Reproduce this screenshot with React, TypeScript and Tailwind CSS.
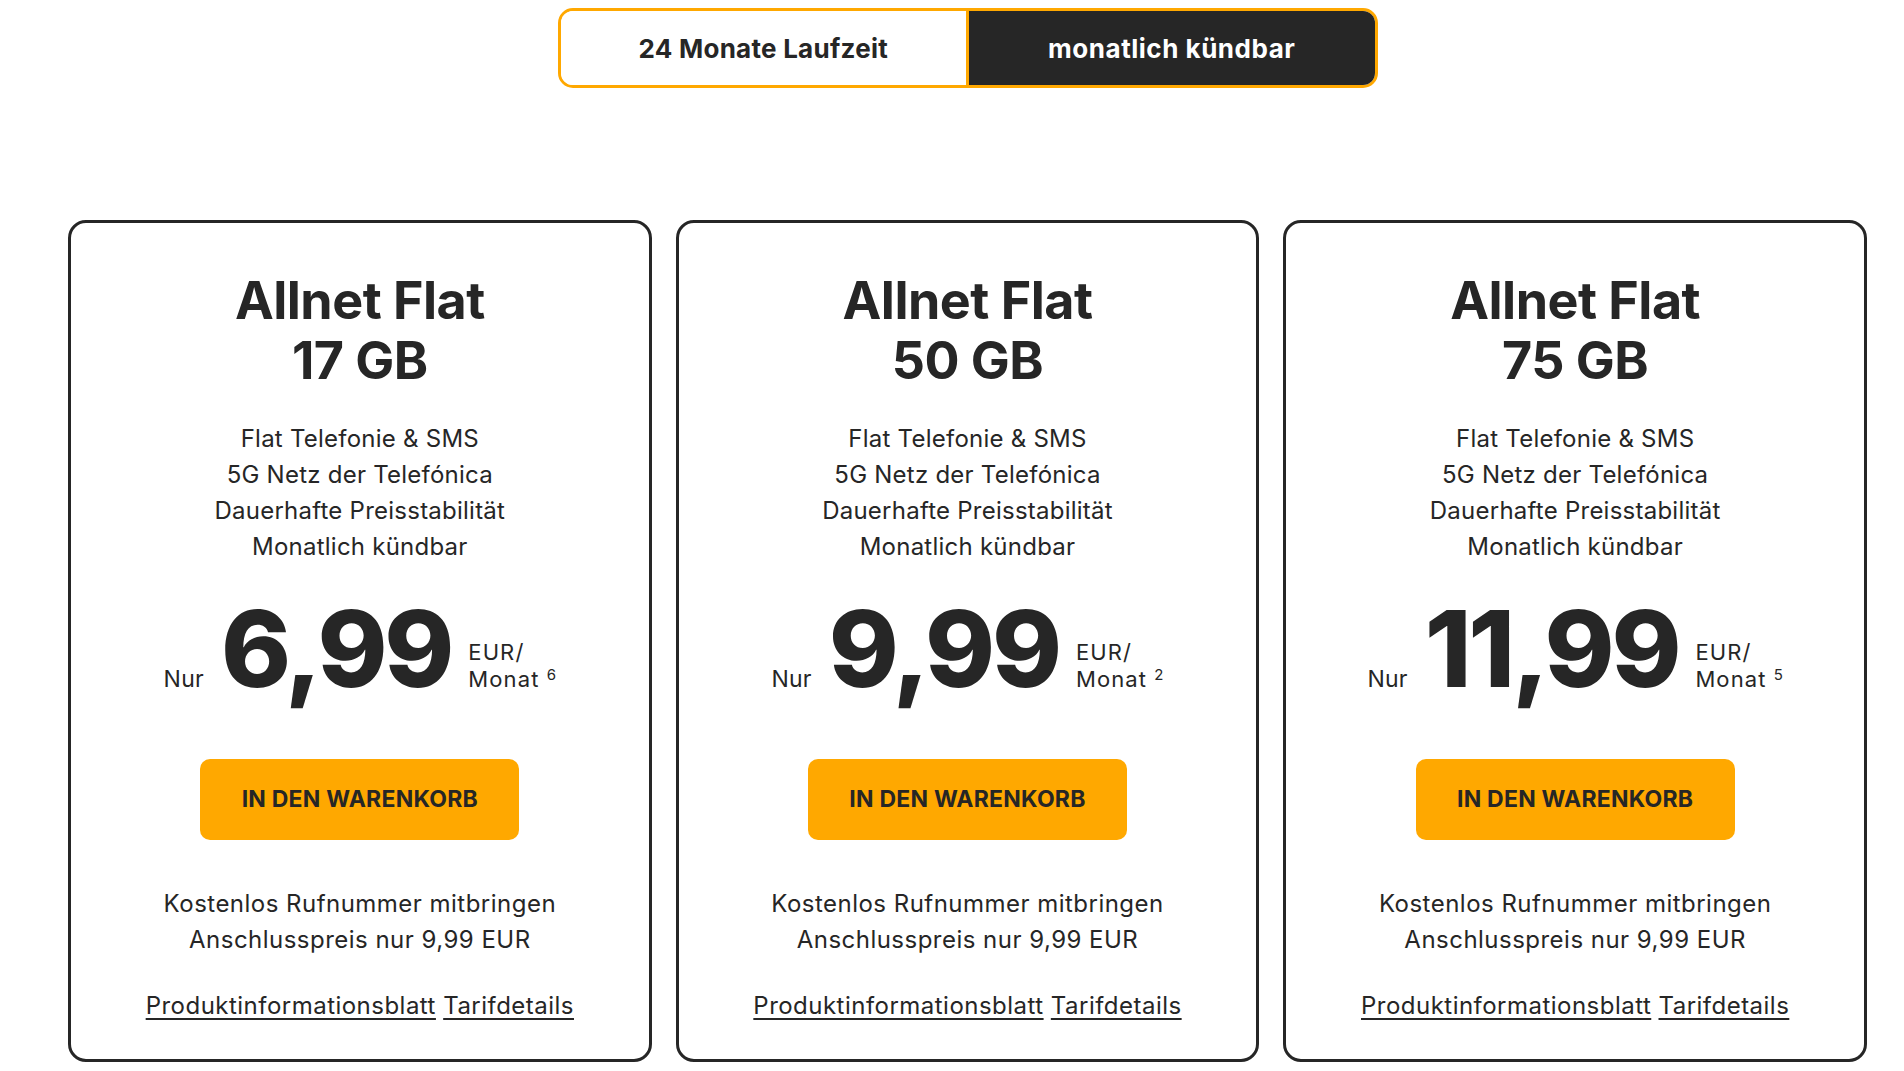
import React, { useState } from 'react';

type Plan = {
  gb: string;
  price: string;
  note: string;
};

const plans: Plan[] = [
  { gb: '17 GB', price: '6,99', note: '6' },
  { gb: '50 GB', price: '9,99', note: '2' },
  { gb: '75 GB', price: '11,99', note: '5' },
];

const features = [
  'Flat Telefonie & SMS',
  '5G Netz der Telefónica',
  'Dauerhafte Preisstabilität',
  'Monatlich kündbar',
];

const PlanCard: React.FC<{ plan: Plan }> = ({ plan }) => (
  <div className="flex flex-col items-center rounded-[18px] border-[3px] border-[#262626] bg-white pt-[48px] pb-[35px] text-center text-[#262626]">
    <h2 className="text-[52px] font-bold leading-[60px] tracking-[-0.01em]">
      Allnet Flat
      <br />
      {plan.gb}
    </h2>

    <ul className="mt-[30px] text-[24px] leading-[36px] tracking-[0.01em]">
      {features.map(f => (
        <li key={f}>{f}</li>
      ))}
    </ul>

    <div className="mt-[44px] text-[23px] leading-none tracking-[0.01em]">
      <span>Nur</span>
      <span className="mx-[17px] inline-block text-[106px] font-extrabold leading-[80px] tracking-[-0.03em]">{plan.price}</span>
      <span className="inline-block text-left text-[22px] leading-[27px] tracking-[0.05em]">
        EUR/
        <br />
        Monat <sup className="text-[15px] tracking-normal">{plan.note}</sup>
      </span>
    </div>

    <button className="mt-[66px] h-[81px] w-[319px] rounded-[10px] bg-[#ffa800] text-[23px] font-bold tracking-[0.01em] text-[#262626]">
      IN DEN WARENKORB
    </button>

    <div className="mt-[46px] text-[24px] leading-[36px] tracking-[0.02em]">
      <p>Kostenlos Rufnummer mitbringen</p>
      <p>Anschlusspreis nur 9,99 EUR</p>
    </div>

    <div className="mt-[30px] text-[24px] leading-[36px] tracking-[0.02em]">
      <a href="#" className="underline decoration-2 underline-offset-4">Produktinformationsblatt</a>{' '}
      <a href="#" className="underline decoration-2 underline-offset-4">Tarifdetails</a>
    </div>
  </div>
);

export default function App() {
  const [term, setTerm] = useState<'24' | 'monthly'>('monthly');

  return (
    <div className="min-h-screen bg-white font-['Inter',sans-serif]">
      <div className="ml-[68px] flex w-[1799px] flex-col pt-[8px]">
        <div className="mx-auto flex h-[80px] w-[820px] overflow-hidden rounded-[15px] border-[3px] border-[#ffa800]">
          <button
            onClick={() => setTerm('24')}
            className={`flex-1 border-r-[3px] border-[#ffa800] text-[26px] font-bold tracking-[0.01em] ${term === '24' ? 'bg-[#262626] text-white' : 'bg-white text-[#262626]'}`}
          >
            24 Monate Laufzeit
          </button>
          <button
            onClick={() => setTerm('monthly')}
            className={`flex-1 text-[26px] font-bold tracking-[0.02em] ${term === 'monthly' ? 'bg-[#262626] text-white' : 'bg-white text-[#262626]'}`}
          >
            monatlich kündbar
          </button>
        </div>

        <div className="mt-[132px] grid grid-cols-3 gap-[24px]">
          {plans.map(p => (
            <PlanCard key={p.gb} plan={p} />
          ))}
        </div>
      </div>
    </div>
  );
}
